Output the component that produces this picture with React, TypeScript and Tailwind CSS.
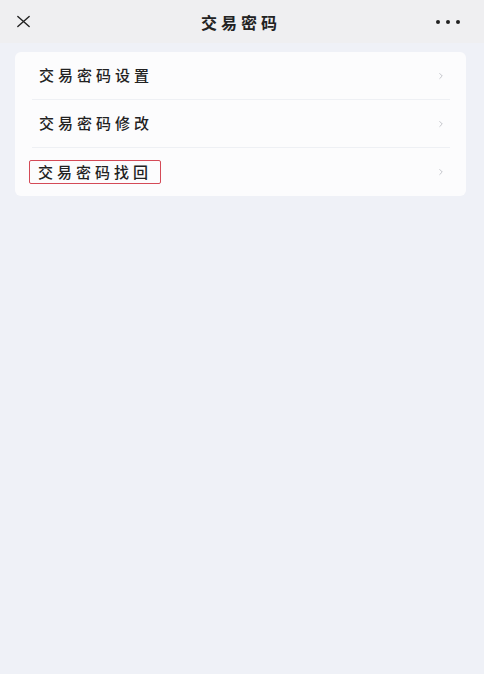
import { ChevronRight } from "lucide-react";

const items = ["交易密码设置", "交易密码修改", "交易密码找回"];

export default function App() {
  return (
    <div
      className="min-h-[674px] w-full bg-[#eff1f7] text-[#1a1a1a]"
      style={{ fontFamily: '"Noto Sans CJK SC", "Noto Sans", sans-serif' }}
    >
      {/* Top bar */}
      <header className="h-[43px] bg-[#efeff1] flex items-center justify-between pl-[15px] pr-[24px]">
        <svg className="w-[17px] h-[17px] text-[#222]" viewBox="0 0 24 24" fill="none" stroke="currentColor" strokeWidth={2}>
          <path strokeLinecap="round" d="M4 5l16 14M20 5L4 19" />
        </svg>
        <h1 className="text-[16px] font-bold tracking-[4px] text-[#222] pl-[14px]">交易密码</h1>
        <div className="flex gap-[6px]">
          <span className="w-[4px] h-[4px] rounded-full bg-[#222]" />
          <span className="w-[4px] h-[4px] rounded-full bg-[#222]" />
          <span className="w-[4px] h-[4px] rounded-full bg-[#222]" />
        </div>
      </header>

      <main className="pl-[15px] pr-[18px] pt-[9px]">
        <div className="bg-[#fcfcfd] rounded-[6px]">
          {items.map((label, i) => (
            <div key={label} className="flex items-center h-[48px] pl-[17px] pr-[16px]">
              <div
                className={`flex-1 h-full flex items-center justify-between ${
                  i < items.length - 1 ? "border-b border-[#eef0f4]" : ""
                }`}
              >
                {i === 2 ? (
                  <span className="-ml-[3px] px-[8px] py-[2px] border-[1.5px] border-[#d44a57] rounded-[2px] text-[15px] font-medium tracking-[4px] text-[#222] leading-[18px]">
                    {label}
                  </span>
                ) : (
                  <span className="pl-[7px] text-[15px] font-medium tracking-[4px] text-[#222]">{label}</span>
                )}
                <ChevronRight className="w-[10px] h-[10px] text-[#b8bac0] mr-[4px]" strokeWidth={2} />
              </div>
            </div>
          ))}
        </div>
      </main>
    </div>
  );
}
